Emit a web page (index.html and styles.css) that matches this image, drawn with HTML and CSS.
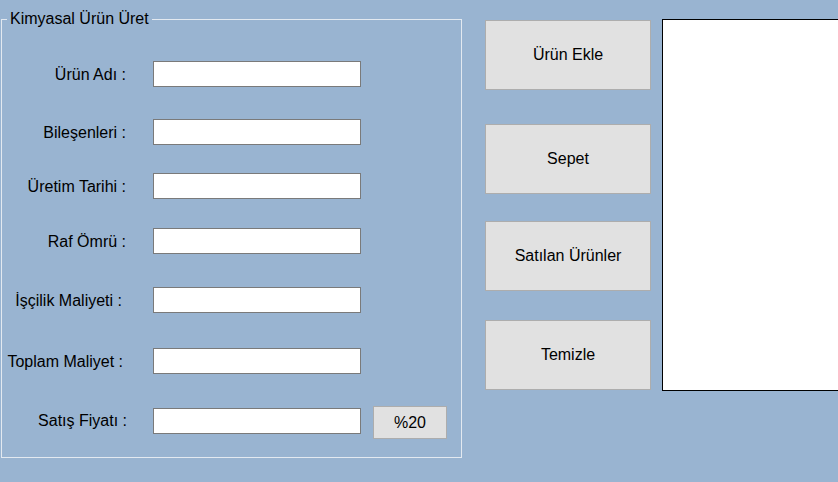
FILE: index.html
```html
<!DOCTYPE html>
<html lang="tr">
<head>
<meta charset="utf-8">
<title>Kimyasal Ürün Üret</title>
<link rel="stylesheet" href="styles.css">
</head>
<body>
<div class="window">
  <fieldset class="group">
    <legend class="group-title">Kimyasal Ürün Üret</legend>
    <div class="form">
      <div class="row"><label class="label">Ürün Adı :</label><input class="field" type="text"></div>
      <div class="row"><label class="label">Bileşenleri :</label><input class="field" type="text"></div>
      <div class="row"><label class="label">Üretim Tarihi :</label><input class="field" type="text"></div>
      <div class="row"><label class="label">Raf Ömrü :</label><input class="field" type="text"></div>
      <div class="row"><label class="label label-in4">İşçilik Maliyeti :</label><input class="field" type="text"></div>
      <div class="row"><label class="label label-in3">Toplam Maliyet :</label><input class="field" type="text"></div>
      <div class="row row-last"><label class="label label-out1">Satış Fiyatı :</label><input class="field" type="text"><button class="btn btn-small">%20</button></div>
    </div>
  </fieldset>
  <div class="actions">
    <button class="btn btn-big">Ürün Ekle</button>
    <button class="btn btn-big">Sepet</button>
    <button class="btn btn-big">Satılan Ürünler</button>
    <button class="btn btn-big">Temizle</button>
  </div>
  <div class="listbox"></div>
</div>
</body>
</html>
```
FILE: styles.css
```css
* { box-sizing: border-box; }
html, body {
  margin: 0;
  padding: 0;
  background: #99b4d1;
  overflow: hidden;
}
body {
  width: 838px;
  height: 482px;
  font-family: "Liberation Sans", Arial, sans-serif;
  font-size: 16px;
  color: #000;
}
.window {
  display: flex;
  align-items: flex-start;
}
.group {
  flex-shrink: 0;
  margin: 10px 0 0 1px;
  padding: 0;
  width: 461px;
  height: 448px;
  border: 1px solid #e3e9f0;
  min-width: 0;
}
.group-title {
  margin-left: 5px;
  padding: 0 3px;
  line-height: 18px;
  font-size: 16px;
}
.form {
  display: grid;
  grid-template-rows: 58px 54px 55px 59px 61px 58px auto;
  padding-top: 33px;
}
.row {
  display: flex;
  align-items: center;
  height: 26px;
}
.row-last {
  height: 33px;
  align-items: flex-start;
}
.row-last .label { margin-top: 4px; }
.row-last .field { margin-top: 2px; }
.label {
  width: 124px;
  text-align: right;
  white-space: nowrap;
  line-height: 18px;
  padding-top: 2px;
}
.label-in4 { padding-right: 4px; }
.label-in3 { padding-right: 3px; }
.label-out1 { width: 125px; margin-right: -1px; }
.field {
  margin: 0 0 0 27px;
  width: 208px;
  height: 26px;
  border: 1px solid #7a7a7a;
  background: #fff;
  padding: 0 3px;
  font: inherit;
  outline: none;
}
.btn {
  font-family: "Liberation Sans", Arial, sans-serif;
  font-size: 16px;
  color: #000;
  background: #e1e1e1;
  border: 1px solid #adadad;
  padding: 0;
  margin: 0;
}
.btn-small {
  margin-left: 12px;
  width: 74px;
  height: 33px;
}
.actions {
  flex-shrink: 0;
  display: grid;
  grid-template-rows: 104px 97px 99px 70px;
  margin: 20px 0 0 23px;
}
.btn-big {
  width: 166px;
  height: 70px;
}
.listbox {
  flex-shrink: 0;
  margin: 19px 0 0 11px;
  width: 200px;
  height: 372px;
  background: #fff;
  border: 1px solid #000;
}
```
